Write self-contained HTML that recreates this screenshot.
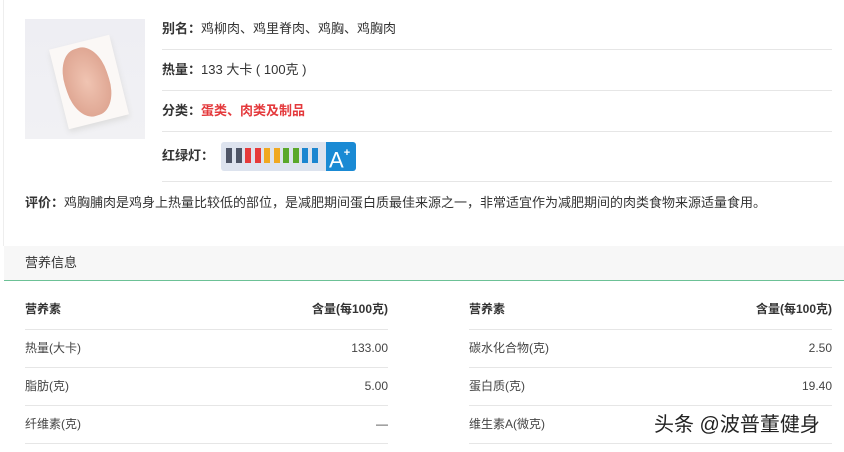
<!DOCTYPE html><html><head><meta charset="utf-8"><style>
*{margin:0;padding:0;box-sizing:border-box}
body{width:844px;height:452px;overflow:hidden;background:#fff;font-family:"Liberation Sans","Noto Sans CJK SC",sans-serif;font-size:13px;color:#333;position:relative}
.a{position:absolute}
.row{position:absolute;left:162px;width:670px;border-bottom:1px solid #e6e6e6;height:41px;line-height:40px}
b{font-weight:bold}
.hl{position:absolute;height:1px;background:#e6e6e6}
.t{position:absolute;font-size:12px;line-height:14px;color:#444}
.h{font-weight:bold;color:#333}
.bars i{width:6px;height:15px;display:block}
</style></head><body>
<div class="a" style="left:3px;top:0;width:1px;height:246px;background:#eee"></div>
<div class="a" style="left:25px;top:19px;width:120px;height:120px;background:linear-gradient(#eeeef3,#f1f1f4);overflow:hidden">
 <div class="a" style="left:33px;top:22px;width:62px;height:82px;background:#fbf8f6;transform:rotate(-14deg);box-shadow:0 3px 6px #ddd"></div>
 <div class="a" style="left:40px;top:28px;width:44px;height:70px;border-radius:45%;background:radial-gradient(#f0c4b2,#d99c88);transform:rotate(-18deg)"></div>
</div>
<div class="row" style="top:9px"><b>别名：</b>鸡柳肉、鸡里脊肉、鸡胸、鸡胸肉</div>
<div class="row" style="top:50px"><b>热量：</b>133 大卡 ( 100克 )</div>
<div class="row" style="top:91px"><b>分类：</b><b style="color:#e4393c">蛋类、肉类及制品</b></div>
<div class="row" style="top:132px;height:50px;line-height:48px"><b>红绿灯：</b></div>
<div class="a" style="left:221px;top:142px;width:108px;height:29px;background:#dde3ee;border-radius:3px 0 0 3px"></div>
<div class="a bars" style="left:226px;top:148px;display:flex;gap:3.5px">
<i style="background:#4e5566"></i><i style="background:#4e5566"></i><i style="background:#e63a3a"></i><i style="background:#e63a3a"></i><i style="background:#f0a820"></i><i style="background:#f0a820"></i><i style="background:#5aa82a"></i><i style="background:#5aa82a"></i><i style="background:#1c86d0"></i><i style="background:#1c86d0"></i></div>
<div class="a" style="left:326px;top:142px;width:30px;height:29px;background:#1a8ad4;border-radius:0 3px 3px 0;color:#fff;font-size:22px;line-height:29px;padding-left:3px">A<sup style="font-size:11px;position:relative;top:-3px;font-weight:bold">+</sup></div>
<div class="a" style="left:25px;top:194px;line-height:18px"><b>评价：</b>鸡胸脯肉是鸡身上热量比较低的部位，是减肥期间蛋白质最佳来源之一，非常适宜作为减肥期间的肉类食物来源适量食用。</div>
<div class="a" style="left:4px;top:246px;width:840px;height:35px;background:#f7f7f7;border-bottom:1px solid #6cc196;padding-left:21px;line-height:34px">营养信息</div>
<div class="t h" style="left:25px;top:302px">营养素</div><div class="t h" style="left:280px;top:302px;width:108px;text-align:right">含量(每100克)</div>
<div class="t h" style="left:469px;top:302px">营养素</div><div class="t h" style="left:724px;top:302px;width:108px;text-align:right">含量(每100克)</div>
<div class="hl" style="left:25px;width:363px;top:329px"></div><div class="hl" style="left:469px;width:363px;top:329px"></div>
<div class="hl" style="left:25px;width:363px;top:367px"></div><div class="hl" style="left:469px;width:363px;top:367px"></div>
<div class="hl" style="left:25px;width:363px;top:405px"></div><div class="hl" style="left:469px;width:363px;top:405px"></div>
<div class="hl" style="left:25px;width:363px;top:443px"></div><div class="hl" style="left:469px;width:363px;top:443px"></div>
<div class="t" style="left:25px;top:341px">热量(大卡)</div><div class="t" style="left:300px;top:341px;width:88px;text-align:right">133.00</div>
<div class="t" style="left:469px;top:341px">碳水化合物(克)</div><div class="t" style="left:744px;top:341px;width:88px;text-align:right">2.50</div>
<div class="t" style="left:25px;top:379px">脂肪(克)</div><div class="t" style="left:300px;top:379px;width:88px;text-align:right">5.00</div>
<div class="t" style="left:469px;top:379px">蛋白质(克)</div><div class="t" style="left:744px;top:379px;width:88px;text-align:right">19.40</div>
<div class="t" style="left:25px;top:417px">纤维素(克)</div><div class="t" style="left:300px;top:417px;width:88px;text-align:right">—</div>
<div class="t" style="left:469px;top:417px">维生素A(微克)</div>
<div class="a" style="left:654px;top:412px;font-size:20px;line-height:26px;color:#222;text-shadow:0 0 2px #fff">头条 @波普董健身</div>
</body></html>
